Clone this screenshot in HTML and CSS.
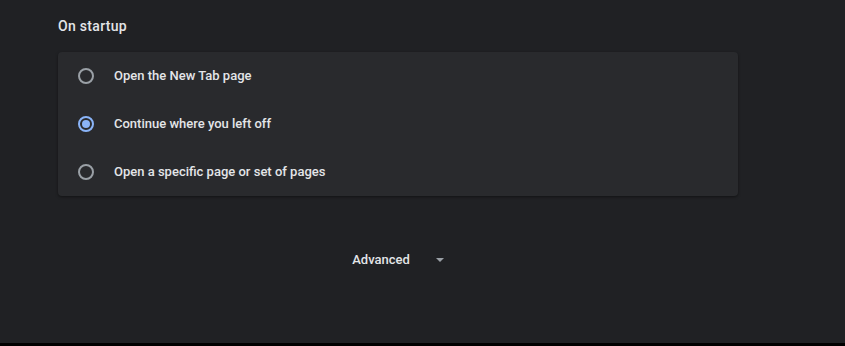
FILE: index.html
```html
<!DOCTYPE html>
<html>
<head>
  <meta charset="UTF-8">
  <title>Settings - On startup</title>
  <link rel="stylesheet" href="styles.css">
</head>
<body>
  <div class="page">
    <div class="section-title">On startup</div>

    <div class="card">
      <label class="option">
        <span class="radio"></span>
        <span class="label">Open the New Tab page</span>
      </label>
      <label class="option">
        <span class="radio checked"></span>
        <span class="label">Continue where you left off</span>
      </label>
      <label class="option">
        <span class="radio"></span>
        <span class="label">Open a specific page or set of pages</span>
      </label>
    </div>

    <div class="advanced">
      <span>Advanced</span>
      <span class="arrow"></span>
    </div>
  </div>
</body>
</html>
```

FILE: styles.css
```css
html {
  background: #000;
}
body {
  margin: 0;
  height: 343px;
  background: #202124;
  font-family: Roboto, 'Noto Sans', sans-serif;
  font-size: 13px;
  color: #e3e5e8;
  overflow: hidden;
}
.page {
  width: 680px;
  padding: 16px 0 0 58px;
}
.section-title {
  font-size: 14px;
  font-weight: 500;
  letter-spacing: 0.3px;
  line-height: 20px;
  margin-bottom: 16px;
}
.card {
  background: #292a2d;
  border-radius: 4px;
  box-shadow: 0 1px 3px rgba(0, 0, 0, 0.45);
}
.option {
  display: flex;
  align-items: center;
  height: 48px;
  padding-left: 20px;
}
.radio {
  box-sizing: border-box;
  width: 16px;
  height: 16px;
  border: 2px solid #9aa0a6;
  border-radius: 50%;
  margin-right: 20px;
  display: flex;
  align-items: center;
  justify-content: center;
}
.radio.checked {
  border-color: #8ab4f8;
}
.radio.checked::after {
  content: "";
  width: 8px;
  height: 8px;
  border-radius: 50%;
  background: #8ab4f8;
}
.label {
  font-weight: 500;
  margin-top: -2px;
}
.advanced {
  display: flex;
  align-items: center;
  justify-content: center;
  height: 40px;
  margin-top: 43px;
  font-weight: 500;
  gap: 26px;
}
.arrow {
  width: 0;
  height: 0;
  border-left: 4px solid transparent;
  border-right: 4px solid transparent;
  border-top: 4px solid #9aa0a6;
  margin-top: 2px;
}
```
